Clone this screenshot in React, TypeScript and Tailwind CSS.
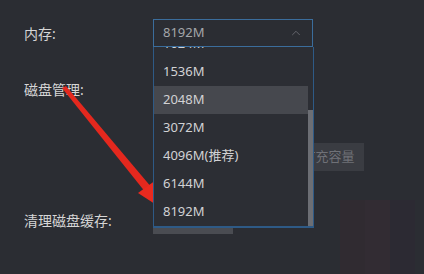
import { ChevronUp } from "lucide-react";

const sizes = ["1024M", "1536M", "2048M", "3072M", "4096M(推荐)", "6144M", "8192M"];

function Arrow() {
  return (
    <svg
      className="absolute left-0 top-0 pointer-events-none"
      width="424"
      height="274"
      viewBox="0 0 424 274"
    >
      <polygon points="62,88 66,86 152,188 146,193" fill="#e4281e" />
      <polygon points="138,193 156,180 158,206" fill="#ea2a1f" />
    </svg>
  );
}

export default function App() {
  return (
    <div
      className="relative w-[424px] h-[274px] overflow-hidden bg-[#2b2d33] text-[#d6d6d6]"
      style={{ fontFamily: '"Noto Sans", "Noto Sans CJK SC", sans-serif' }}
    >
      <div className="flex flex-col pl-6 pt-[19px]">
        <div className="flex items-center h-7">
          <div className="w-[129px] text-[14px]">内存:</div>
          <div className="relative z-20 flex items-center justify-between w-[160px] h-7 px-[9px] border border-[#3b6d9c] bg-[#2b2d33] text-[13px] text-[#a4a6aa]">
            <span>8192M</span>
            <ChevronUp size={14} strokeWidth={1.5} className="text-[#6a6c72]" />
          </div>
        </div>

        <div className="flex items-center h-7 mt-[28px]">
          <div className="w-[129px] text-[14px]">磁盘管理:</div>
        </div>

        <div className="flex items-center h-7 mt-[40px]">
          <div className="w-[269px]" />
          <div className="flex items-center justify-center w-[71px] h-7 bg-[#3a3c42] text-[13px] text-[#6f7177]">
            扩充容量
          </div>
        </div>

        <div className="flex items-center h-7 mt-[35px]">
          <div className="w-[129px] text-[14px]">清理磁盘缓存:</div>
          <div className="w-[80px] h-7 bg-[#4a4c52]" />
        </div>
      </div>

      {/* dropdown list */}
      <div className="absolute z-10 left-[153px] top-[47px] w-[161px] h-[181px] overflow-hidden border-x border-b-2 border-[#2e5a86] bg-[#2c2e34]">
        <div className="flex flex-col mt-[-17px] mr-[5px]">
          {sizes.map((s) => (
            <div
              key={s}
              className={
                "flex items-center h-7 pl-[9px] text-[13px] text-[#d2d2d4] " +
                (s === "2048M" ? "bg-[#46484e]" : "")
              }
            >
              {s}
            </div>
          ))}
        </div>
        <div className="absolute right-0 top-[63px] w-[5px] h-[118px] bg-[#6c6e74]" />
      </div>

      {/* faint blocks bottom right */}
      <div className="absolute left-[340px] top-[200px] flex h-[74px]">
        <div className="w-[25px] bg-[#302b31]" />
        <div className="w-[25px] bg-[#322c33]" />
        <div className="w-[25px] bg-[#2c2a33]" />
      </div>

      <Arrow />
    </div>
  );
}
